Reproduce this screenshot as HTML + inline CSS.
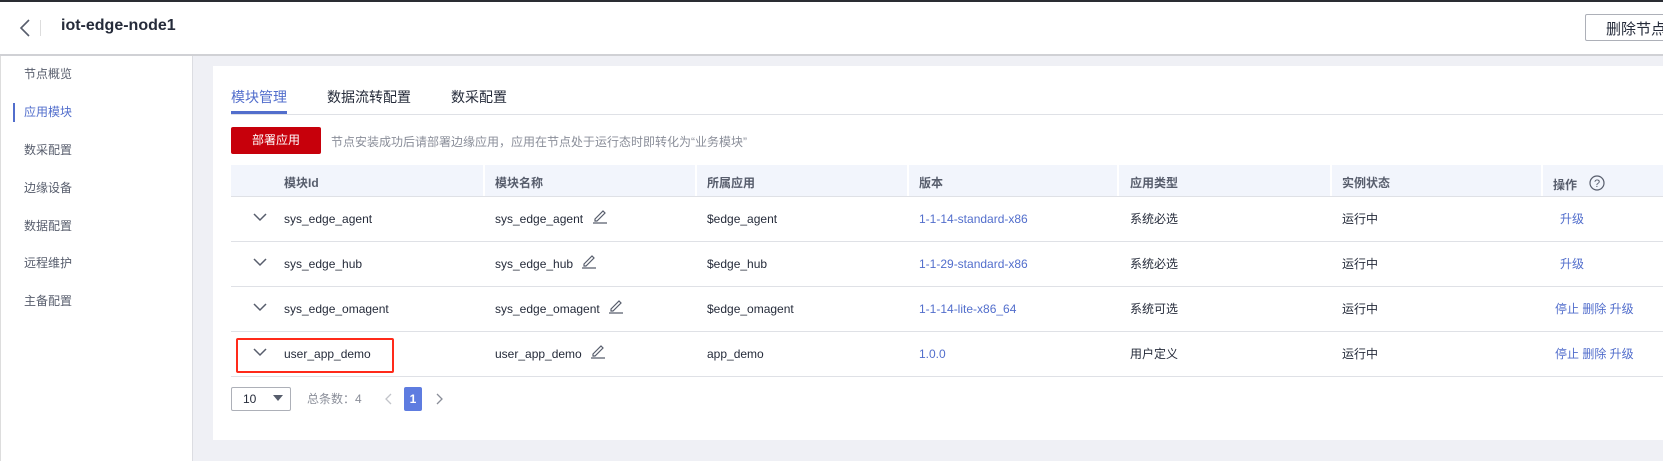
<!DOCTYPE html>
<html><head><meta charset="utf-8"><style>
*{margin:0;padding:0;box-sizing:border-box}
body{width:1663px;height:461px;overflow:hidden;background:#eff0f5;font-family:"Liberation Sans","Noto Sans CJK SC",sans-serif;font-size:12px;color:#252b3a;position:relative}
.a{position:absolute;white-space:nowrap}
.hdr{position:absolute;left:0;top:0;width:1663px;height:56px;background:#fff;border-top:2px solid #2a2d33;border-bottom:2px solid #d0d1d5}
.side{position:absolute;left:0;top:56px;width:193px;height:405px;background:#fff;border-left:1px solid #ddd;border-right:1px solid #dcdde2}
.side div{position:absolute;left:23px;font-size:12px;color:#575d6c;line-height:16px}
.card{position:absolute;left:213px;top:66px;width:1460px;height:374px;background:#fff}
.th{position:absolute;top:165px;height:31px;background:#f2f5fc}
.hd{position:absolute;top:174px;font-size:12px;color:#575d6c;font-weight:bold}
.sep{position:absolute;left:231px;width:1432px;height:1px;background:#dfe1e6}
.c{position:absolute;font-size:12px;line-height:16px;white-space:nowrap}
.lk{color:#526ecc}
.vd{position:absolute;top:165px;width:2px;height:31px;background:#fff}
</style></head><body>
<div class="hdr"></div>
<svg class="a" style="left:18px;top:18px" width="14" height="20"><path d="M11 2 L3 10 L11 18" fill="none" stroke="#575d6c" stroke-width="1.6"/></svg>
<div class="a" style="left:40px;top:20px;width:1px;height:16px;background:#ddd"></div>
<div class="a" style="left:61px;top:17px;font-size:16px;font-weight:bold;color:#252b3a">iot-edge-node1</div>
<div class="a" style="left:1585px;top:14px;width:90px;height:27px;border:1px solid #adb0b8;border-radius:2px;background:#fff"></div>
<div class="a" style="left:1606px;top:18px;font-size:15px;color:#252b3a">删除节点</div>

<div class="side">
<div style="top:10px">节点概览</div>
<div style="top:48px;color:#526ecc">应用模块</div>
<div style="top:86px">数采配置</div>
<div style="top:124px">边缘设备</div>
<div style="top:162px">数据配置</div>
<div style="top:199px">远程维护</div>
<div style="top:237px">主备配置</div>
</div>
<div class="a" style="left:13px;top:103px;width:2px;height:19px;background:#526ecc"></div>

<div class="card"></div>
<div class="a" style="left:231px;top:87px;font-size:14px;color:#526ecc">模块管理</div>
<div class="a" style="left:327px;top:87px;font-size:14px;color:#252b3a">数据流转配置</div>
<div class="a" style="left:451px;top:87px;font-size:14px;color:#252b3a">数采配置</div>
<div class="a" style="left:231px;top:114px;width:1432px;height:1px;background:#dfe1e6"></div>
<div class="a" style="left:231px;top:111px;width:56px;height:3px;background:#526ecc"></div>

<div class="a" style="left:231px;top:127px;width:90px;height:27px;background:#c7000b;border-radius:2px;color:#fff;font-size:12px;text-align:center;line-height:27px">部署应用</div>
<div class="a" style="left:331px;top:133px;color:#8a8e99;font-size:12px">节点安装成功后请部署边缘应用，应用在节点处于运行态时即转化为“业务模块”</div>

<div class="th" style="left:231px;width:1432px"></div>
<div class="vd" style="left:483px"></div><div class="vd" style="left:695px"></div><div class="vd" style="left:907px"></div><div class="vd" style="left:1117px"></div><div class="vd" style="left:1330px"></div><div class="vd" style="left:1541px"></div>
<div class="hd" style="left:284px">模块Id</div>
<div class="hd" style="left:495px">模块名称</div>
<div class="hd" style="left:707px">所属应用</div>
<div class="hd" style="left:919px">版本</div>
<div class="hd" style="left:1130px">应用类型</div>
<div class="hd" style="left:1342px">实例状态</div>
<div class="hd" style="left:1553px;top:176px">操作</div>
<svg class="a" style="left:1589px;top:175px" width="16" height="16"><circle cx="8" cy="8" r="7" fill="none" stroke="#575d6c" stroke-width="1.2"/><text x="8" y="12" font-size="11" text-anchor="middle" fill="#575d6c" font-family="Liberation Sans">?</text></svg>

<div class="sep" style="top:196px"></div>
<div class="sep" style="top:241px"></div>
<div class="sep" style="top:286px"></div>
<div class="sep" style="top:331px"></div>
<div class="sep" style="top:376px"></div>

<!-- rows -->
<svg class="a" style="left:253px;top:212px" width="14" height="10"><path d="M1 2 L7 8 L13 2" fill="none" stroke="#575d6c" stroke-width="1.5"/></svg>
<div class="c" style="left:284px;top:211px">sys_edge_agent</div>
<div class="c" style="left:495px;top:211px">sys_edge_agent</div>
<svg class="a" style="left:592px;top:208px" width="16" height="16"><path d="M3 11 L11 3 L13 5 L5 13 L3 13 Z M1 15 H15" fill="none" stroke="#575d6c" stroke-width="1.2"/></svg>
<div class="c" style="left:707px;top:211px">$edge_agent</div>
<div class="c lk" style="left:919px;top:211px">1-1-14-standard-x86</div>
<div class="c" style="left:1130px;top:211px">系统必选</div>
<div class="c" style="left:1342px;top:211px">运行中</div>
<div class="c lk" style="left:1560px;top:211px">升级</div>

<svg class="a" style="left:253px;top:257px" width="14" height="10"><path d="M1 2 L7 8 L13 2" fill="none" stroke="#575d6c" stroke-width="1.5"/></svg>
<div class="c" style="left:284px;top:256px">sys_edge_hub</div>
<div class="c" style="left:495px;top:256px">sys_edge_hub</div>
<svg class="a" style="left:581px;top:253px" width="16" height="16"><path d="M3 11 L11 3 L13 5 L5 13 L3 13 Z M1 15 H15" fill="none" stroke="#575d6c" stroke-width="1.2"/></svg>
<div class="c" style="left:707px;top:256px">$edge_hub</div>
<div class="c lk" style="left:919px;top:256px">1-1-29-standard-x86</div>
<div class="c" style="left:1130px;top:256px">系统必选</div>
<div class="c" style="left:1342px;top:256px">运行中</div>
<div class="c lk" style="left:1560px;top:256px">升级</div>

<svg class="a" style="left:253px;top:302px" width="14" height="10"><path d="M1 2 L7 8 L13 2" fill="none" stroke="#575d6c" stroke-width="1.5"/></svg>
<div class="c" style="left:284px;top:301px">sys_edge_omagent</div>
<div class="c" style="left:495px;top:301px">sys_edge_omagent</div>
<svg class="a" style="left:608px;top:298px" width="16" height="16"><path d="M3 11 L11 3 L13 5 L5 13 L3 13 Z M1 15 H15" fill="none" stroke="#575d6c" stroke-width="1.2"/></svg>
<div class="c" style="left:707px;top:301px">$edge_omagent</div>
<div class="c lk" style="left:919px;top:301px">1-1-14-lite-x86_64</div>
<div class="c" style="left:1130px;top:301px">系统可选</div>
<div class="c" style="left:1342px;top:301px">运行中</div>
<div class="c lk" style="left:1555px;top:301px">停止 删除 升级</div>

<div class="a" style="left:236px;top:338px;width:158px;height:35px;border:2px solid #ff2a1a;border-radius:2px"></div>
<svg class="a" style="left:253px;top:347px" width="14" height="10"><path d="M1 2 L7 8 L13 2" fill="none" stroke="#575d6c" stroke-width="1.5"/></svg>
<div class="c" style="left:284px;top:346px">user_app_demo</div>
<div class="c" style="left:495px;top:346px">user_app_demo</div>
<svg class="a" style="left:590px;top:343px" width="16" height="16"><path d="M3 11 L11 3 L13 5 L5 13 L3 13 Z M1 15 H15" fill="none" stroke="#575d6c" stroke-width="1.2"/></svg>
<div class="c" style="left:707px;top:346px">app_demo</div>
<div class="c lk" style="left:919px;top:346px">1.0.0</div>
<div class="c" style="left:1130px;top:346px">用户定义</div>
<div class="c" style="left:1342px;top:346px">运行中</div>
<div class="c lk" style="left:1555px;top:346px">停止 删除 升级</div>

<!-- pagination -->
<div class="a" style="left:231px;top:387px;width:60px;height:24px;border:1px solid #adb0b8;border-radius:2px"></div>
<div class="c" style="left:243px;top:391px">10</div>
<svg class="a" style="left:273px;top:395px" width="10" height="6"><path d="M0 0 H10 L5 6 Z" fill="#575d6c"/></svg>
<div class="c" style="left:307px;top:391px;color:#8a8e99">总条数：4</div>
<svg class="a" style="left:385px;top:393px" width="8" height="12"><path d="M6 1 L1 6 L6 11" fill="none" stroke="#c2c4ca" stroke-width="1.3"/></svg>
<div class="a" style="left:404px;top:387px;width:18px;height:24px;background:#5e7ce0;border-radius:2px;color:#fff;font-size:12px;font-weight:bold;text-align:center;line-height:24px">1</div>
<svg class="a" style="left:435px;top:393px" width="8" height="12"><path d="M2 1 L7 6 L2 11" fill="none" stroke="#8a8e99" stroke-width="1.3"/></svg>
</body></html>
